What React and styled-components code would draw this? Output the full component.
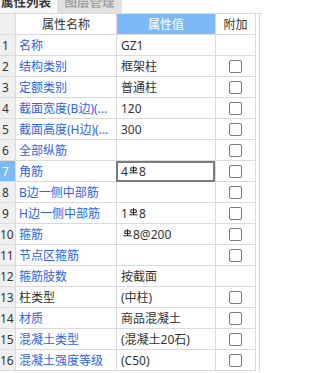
import styled, { createGlobalStyle } from "styled-components";

const GlobalStyle = createGlobalStyle`
  html, body {
    margin: 0;
    padding: 0;
    background: #ffffff;
    overflow: hidden;
  }
  body {
    font-family: "Noto Sans", "Noto Sans CJK SC", sans-serif;
    font-size: 12px;
    color: #333333;
  }
`;

const Panel = styled.div`
  width: 262px;
  height: 373px;
  overflow: hidden;
  background: #ffffff;
`;

const Tabs = styled.div`
  display: flex;
  gap: 2px;
  height: 20px;
  margin-top: -7px;
  border-bottom: 1px solid #d9d9d9;
`;

const Tab = styled.div`
  width: ${(p) => p.$width}px;
  padding-left: ${(p) => (p.$active ? 1 : 0)}px;
  box-sizing: border-box;
  line-height: 20px;
  font-size: 12.5px;
  font-weight: 700;
  text-align: ${(p) => (p.$active ? "left" : "center")};
  color: ${(p) => (p.$active ? "#3a3a3a" : "#a3a3a3")};
  background: ${(p) => (p.$active ? "#f6f6f6" : "#e1e1e1")};
`;

const Body = styled.div`
  display: flex;
`;

const Table = styled.div`
  width: 256px;
  flex: none;
`;

const Track = styled.div`
  flex: 1;
  margin-left: 3px;
  border-left: 1px solid #d4d4d4;
`;

const Row = styled.div`
  display: grid;
  grid-template-columns: 16px 101px 99px 40px;
  height: 21px;
`;

const Cell = styled.div`
  position: relative;
  box-sizing: border-box;
  display: flex;
  align-items: center;
  justify-content: ${(p) => (p.$center ? "center" : "flex-start")};
  padding-left: ${(p) => p.$pad || 0}px;
  border-right: 1px solid #dadada;
  border-bottom: 1px solid #dadada;
  white-space: nowrap;
  overflow: hidden;
  background: ${(p) => (p.$blue ? "#7db9f4" : "transparent")};
  color: ${(p) => (p.$blue ? "#ffffff" : "#333333")};
`;

const NumCell = styled(Cell)`
  padding-left: ${(p) => (p.$wide ? 0 : 2)}px;
  background: ${(p) => (p.$blue ? "#7db9f4" : "#f0f0f0")};
  color: ${(p) => (p.$blue ? "#ffffff" : "#333333")};
  overflow: visible;
`;

const Name = styled.span`
  color: ${(p) => (p.$plain ? "#333333" : "#2e63e6")};
`;

const EditCell = styled(Cell)`
  overflow: visible;
  &::after {
    content: "";
    position: absolute;
    left: -1px;
    top: 0;
    right: 0;
    bottom: -1px;
    border: 2px solid #7a7a7a;
    pointer-events: none;
  }
`;

const Check = styled.span`
  width: 13px;
  height: 13px;
  box-sizing: border-box;
  border: 1px solid #7a7a7a;
  border-radius: 2px;
  background: #ffffff;
`;

const Bar = styled.svg`
  width: 9px;
  height: 8px;
  margin: 0 1px;
  align-self: flex-start;
  margin-top: 5px;
`;

function Rebar() {
  return (
    <Bar viewBox="0 0 9 8">
      <path
        d="M4.5 0.2V6.8M1.8 1.8H7.2V4.6H1.8ZM0.3 6.8H8.7"
        stroke="#222"
        strokeWidth="1"
        fill="none"
      />
    </Bar>
  );
}

const rows = [
  { name: "名称", value: "GZ1", check: false },
  { name: "结构类别", value: "框架柱", check: true },
  { name: "定额类别", value: "普通柱", check: true },
  { name: "截面宽度(B边)(...", value: "120", check: true },
  { name: "截面高度(H边)(...", value: "300", check: true },
  { name: "全部纵筋", value: "", check: true },
  { name: "角筋", value: ["4", "8"], check: true, active: true },
  { name: "B边一侧中部筋", value: "", check: true },
  { name: "H边一侧中部筋", value: ["1", "8"], check: true },
  { name: "箍筋", value: [" ", "8@200"], check: true },
  { name: "节点区箍筋", value: "", check: true },
  { name: "箍筋肢数", value: "按截面", check: false },
  { name: "柱类型", value: "(中柱)", check: true, plain: true },
  { name: "材质", value: "商品混凝土", check: true },
  { name: "混凝土类型", value: "(混凝土20石)", check: true },
  { name: "混凝土强度等级", value: "(C50)", check: true },
];

function Value({ value }) {
  if (Array.isArray(value)) {
    return (
      <>
        {value[0].trim()}
        <Rebar />
        {value[1]}
      </>
    );
  }
  return value;
}

export default function App() {
  return (
    <Panel>
      <GlobalStyle />
      <Tabs>
        <Tab $active $width={55}>属性列表</Tab>
        <Tab $width={65}>图层管理</Tab>
      </Tabs>
      <Body>
        <Table>
          <Row>
            <NumCell />
            <Cell $center>属性名称</Cell>
            <Cell $center $blue>属性值</Cell>
            <Cell $center>附加</Cell>
          </Row>
          {rows.map((r, i) => {
            const ValueCell = r.active ? EditCell : Cell;
            return (
              <Row key={i}>
                <NumCell $blue={r.active} $wide={i >= 9}>{i + 1}</NumCell>
                <Cell $pad={3}>
                  <Name $plain={r.plain}>{r.name}</Name>
                </Cell>
                <ValueCell $pad={Array.isArray(r.value) && r.value[0] === " " ? 5 : 4}>
                  <Value value={r.value} />
                </ValueCell>
                <Cell $center>{r.check && <Check />}</Cell>
              </Row>
            );
          })}
        </Table>
        <Track />
      </Body>
    </Panel>
  );
}
